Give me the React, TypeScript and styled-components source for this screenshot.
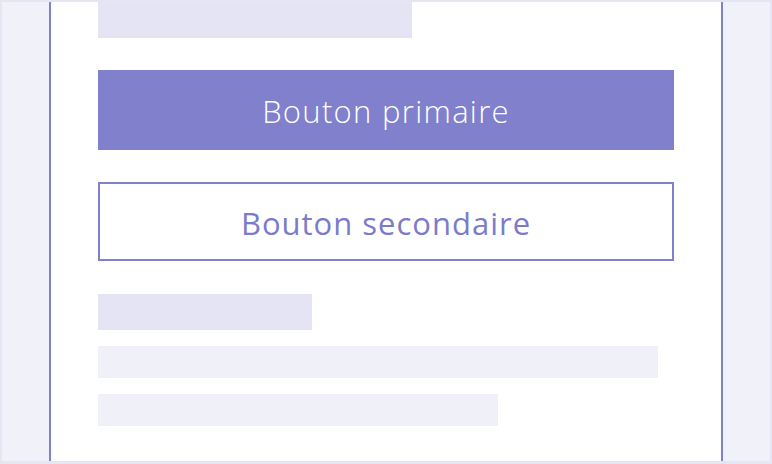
import React from "react";
import styled, { createGlobalStyle } from "styled-components";

const Global = createGlobalStyle`
  html, body { margin: 0; padding: 0; background: #ffffff; }
  body { font-family: "Open Sans", "Noto Sans", sans-serif; }
`;

const Frame = styled.div`
  box-sizing: border-box;
  width: 772px;
  height: 464px;
  border: 2px solid #e5e5f3;
  border-bottom-width: 3px;
  display: grid;
  grid-template-columns: 47px 2px 1fr 2px 47px;
  background: #ffffff;
  overflow: hidden;
`;

const SidePanel = styled.div`
  background: #f1f1fa;
`;

const Rule = styled.div`
  background: #8080cc;
`;

const Content = styled.main`
  display: flex;
  flex-direction: column;
  padding: 0 47px;
  background: #ffffff;
`;

const Bar = styled.div<{ $w: number; $h: number; $tone: "strong" | "soft"; $mt?: number }>`
  width: ${(p) => p.$w}px;
  height: ${(p) => p.$h}px;
  margin-top: ${(p) => p.$mt ?? 0}px;
  background: ${(p) => (p.$tone === "strong" ? "#e4e4f4" : "#f0f0f9")};
  flex: none;
`;

const Button = styled.button<{ $variant: "primary" | "secondary"; $mt: number; $h: number }>`
  box-sizing: border-box;
  width: 576px;
  height: ${(p) => p.$h}px;
  margin-top: ${(p) => p.$mt}px;
  flex: none;
  display: flex;
  align-items: center;
  justify-content: center;
  padding: 2px 0 0;
  font-family: "Open Sans", "Noto Sans", sans-serif;
  font-size: 31px;
  letter-spacing: ${(p) => (p.$variant === "primary" ? "1.3px" : "1px")};
  font-weight: ${(p) => (p.$variant === "primary" ? 300 : 400)};
  background: ${(p) => (p.$variant === "primary" ? "#8080cc" : "#ffffff")};
  color: ${(p) => (p.$variant === "primary" ? "#ffffff" : "#7b7bcb")};
  border: ${(p) => (p.$variant === "primary" ? "none" : "2px solid #8080cc")};
  cursor: pointer;
`;

export default function App() {
  return (
    <>
      <Global />
      <Frame>
        <SidePanel />
        <Rule />
        <Content>
          <Bar $w={314} $h={36} $tone="strong" />
          <Button $variant="primary" $mt={32} $h={80}>
            Bouton primaire
          </Button>
          <Button $variant="secondary" $mt={32} $h={79}>
            Bouton secondaire
          </Button>
          <Bar $w={214} $h={36} $tone="strong" $mt={33} />
          <Bar $w={560} $h={32} $tone="soft" $mt={16} />
          <Bar $w={400} $h={32} $tone="soft" $mt={16} />
        </Content>
        <Rule />
        <SidePanel />
      </Frame>
    </>
  );
}
